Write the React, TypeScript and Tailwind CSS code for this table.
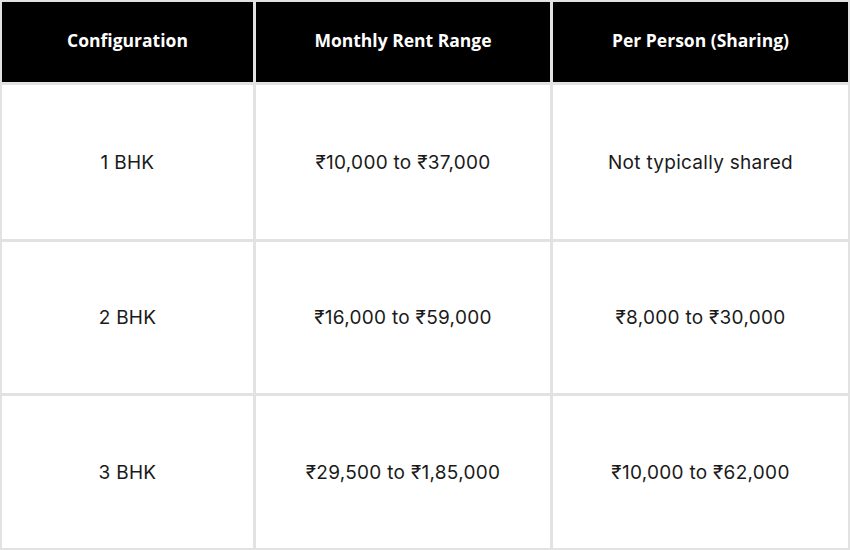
const rows = [
  ["1 BHK", "₹10,000 to ₹37,000", "Not typically shared"],
  ["2 BHK", "₹16,000 to ₹59,000", "₹8,000 to ₹30,000"],
  ["3 BHK", "₹29,500 to ₹1,85,000", "₹10,000 to ₹62,000"],
];

const headers = ["Configuration", "Monthly Rent Range", "Per Person (Sharing)"];

export default function App() {
  return (
    <div className="w-[850px] h-[550px] bg-white font-['Inter',sans-serif]">
      <div className="grid grid-cols-[251px_294px_1fr] grid-rows-[80px_154px_151px_152px] gap-[3px] p-[2px] bg-[#e2e2e2] h-full">
        {headers.map((h) => (
          <div
            key={h}
            className="bg-black text-white flex items-center justify-center pb-[3px] font-['Open_Sans',sans-serif] text-[17.5px] font-bold"
          >
            {h}
          </div>
        ))}
        {rows.map((row) =>
          row.map((cell, i) => (
            <div
              key={row[0] + i}
              className="bg-white text-[#1a1a1a] flex items-center justify-center pt-[2px] text-[19px] tracking-[0.015em]"
            >
              {cell}
            </div>
          ))
        )}
      </div>
    </div>
  );
}
